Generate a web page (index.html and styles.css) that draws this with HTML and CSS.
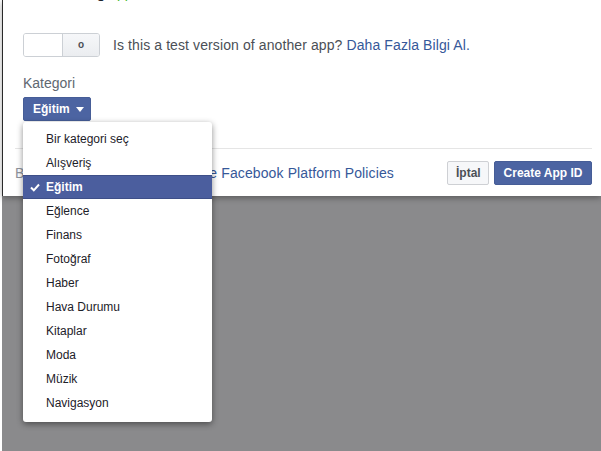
FILE: index.html
```html
<!DOCTYPE html>
<html>
<head>
    <title>Create a New App ID</title>
    <link rel="stylesheet" href="styles.css">
</head>
<body>
    <div class="overlay">
        <div class="dialog">
            <div class="dialog-body">
                <div class="cut-line"><b>Adding</b> <span class="green">app</span></div>

                <div class="test-row">
                    <div class="toggle">
                        <span class="toggle-off"></span>
                        <span class="toggle-knob">o</span>
                    </div>
                    <span class="test-text">Is this a test version of another app? <a href="#">Daha Fazla Bilgi Al.</a></span>
                </div>

                <div class="field-label">Kategori</div>
                <div class="select-wrap">
                    <button type="button" class="btn-select">Eğitim <span class="caret"></span></button>

                    <ul class="menu">
                        <li>Bir kategori seç</li>
                        <li>Alışveriş</li>
                        <li class="selected">
                            <svg class="check" width="10" height="9" viewBox="0 0 10 9"><polyline points="1,4.5 3.8,7.3 9,1.5" fill="none" stroke="#fff" stroke-width="2"/></svg>
                            Eğitim
                        </li>
                        <li>Eğlence</li>
                        <li>Finans</li>
                        <li>Fotoğraf</li>
                        <li>Haber</li>
                        <li>Hava Durumu</li>
                        <li>Kitaplar</li>
                        <li>Moda</li>
                        <li>Müzik</li>
                        <li>Navigasyon</li>
                    </ul>
                </div>
            </div>

            <div class="dialog-footer">
                <span class="policy">By proceeding, you agree to <a href="#">the Facebook Platform Policies</a></span>
                <div class="actions">
                    <button type="button" class="btn-cancel">İptal</button>
                    <button type="button" class="btn-create">Create App ID</button>
                </div>
            </div>
        </div>
    </div>
</body>
</html>
```

FILE: styles.css
```css
body {
    margin: 0;
    background-color: #fff;
    font-family: "Liberation Sans", Arial, sans-serif;
    overflow: hidden;
}

.overlay {
    margin-left: 2px;
    height: 451px;
    background-color: #8a8a8c;
}

.dialog {
    display: flow-root;
    background-color: #fff;
    border-left: 1px solid #2a2a2a;
    height: 196px;
    box-shadow: 0 2px 6px rgba(0, 0, 0, 0.35);
}

.dialog-body {
    display: flow-root;
    padding: 0 20px;
    height: 148px;
}

.cut-line {
    margin-top: -16px;
    height: 18px;
    line-height: 18px;
    font-size: 14px;
    color: #1d2129;
    padding-left: 34px;
}

.green {
    color: #42b72a;
}

.test-row {
    display: flex;
    align-items: center;
    margin-top: 31px;
    height: 24px;
}

.toggle {
    display: flex;
    width: 77px;
    height: 24px;
    box-sizing: border-box;
    border: 1px solid #ccd0d5;
    border-radius: 3px;
    overflow: hidden;
}

.toggle-off {
    width: 38px;
    border-right: 1px solid #ccd0d5;
    background-color: #fff;
}

.toggle-knob {
    flex: 1;
    background: linear-gradient(#f6f7f9, #ebedf0);
    text-align: center;
    font-size: 10px;
    font-weight: bold;
    line-height: 22px;
    color: #4b4f56;
}

.test-text {
    margin-left: 13px;
    font-size: 14px;
    letter-spacing: 0.1px;
    color: #4b4f56;
}

a {
    color: #365899;
    text-decoration: none;
}

.field-label {
    margin-top: 17px;
    font-size: 14px;
    line-height: 18px;
    color: #606770;
}

.select-wrap {
    position: relative;
    margin-top: 5px;
}

.btn-select {
    display: block;
    width: 68px;
    height: 24px;
    padding: 0 0 0 9px;
    text-align: left;
    border: 1px solid #465d97;
    border-radius: 2px;
    background-color: #4c64a2;
    color: #fff;
    font-family: "Liberation Sans", Arial, sans-serif;
    font-size: 12px;
    font-weight: bold;
}

.caret {
    display: inline-block;
    margin-left: 3px;
    vertical-align: middle;
    border-left: 4px solid transparent;
    border-right: 4px solid transparent;
    border-top: 5px solid #fff;
}

.menu {
    position: absolute;
    top: 25px;
    left: 0;
    width: 189px;
    margin: 0;
    padding: 5px 0 7px;
    list-style: none;
    background-color: #fff;
    border-radius: 3px;
    box-shadow: 0 2px 6px rgba(0, 0, 0, 0.45);
    z-index: 10;
}

.menu li {
    position: relative;
    height: 24px;
    line-height: 24px;
    padding-left: 23px;
    font-size: 12px;
    color: #1d2129;
}

.menu li.selected {
    background-color: #4b5e9e;
    color: #fff;
    font-weight: bold;
    border-top: 1px solid #3e4f88;
    border-bottom: 1px solid #3e4f88;
    height: 22px;
    line-height: 22px;
}

.check {
    position: absolute;
    left: 7px;
    top: 7px;
}

.dialog-footer {
    display: flex;
    align-items: center;
    justify-content: space-between;
    margin: 0 9px 0 12px;
    padding-top: 12px;
    border-top: 1px solid #e5e5e5;
}

.policy {
    font-size: 14px;
    letter-spacing: 0.12px;
    color: #90949c;
}

.actions {
    display: flex;
    gap: 5px;
}

.btn-cancel,
.btn-create {
    height: 24px;
    padding: 0 8px;
    border-radius: 2px;
    font-family: "Liberation Sans", Arial, sans-serif;
    font-size: 12px;
    font-weight: bold;
}

.btn-cancel {
    width: 42px;
    background-color: #f6f7f9;
    border: 1px solid #ced0d4;
    color: #4b4f56;
}

.btn-create {
    width: 98px;
    background-color: #4c64a2;
    border: 1px solid #465d97;
    color: #fff;
}
```
